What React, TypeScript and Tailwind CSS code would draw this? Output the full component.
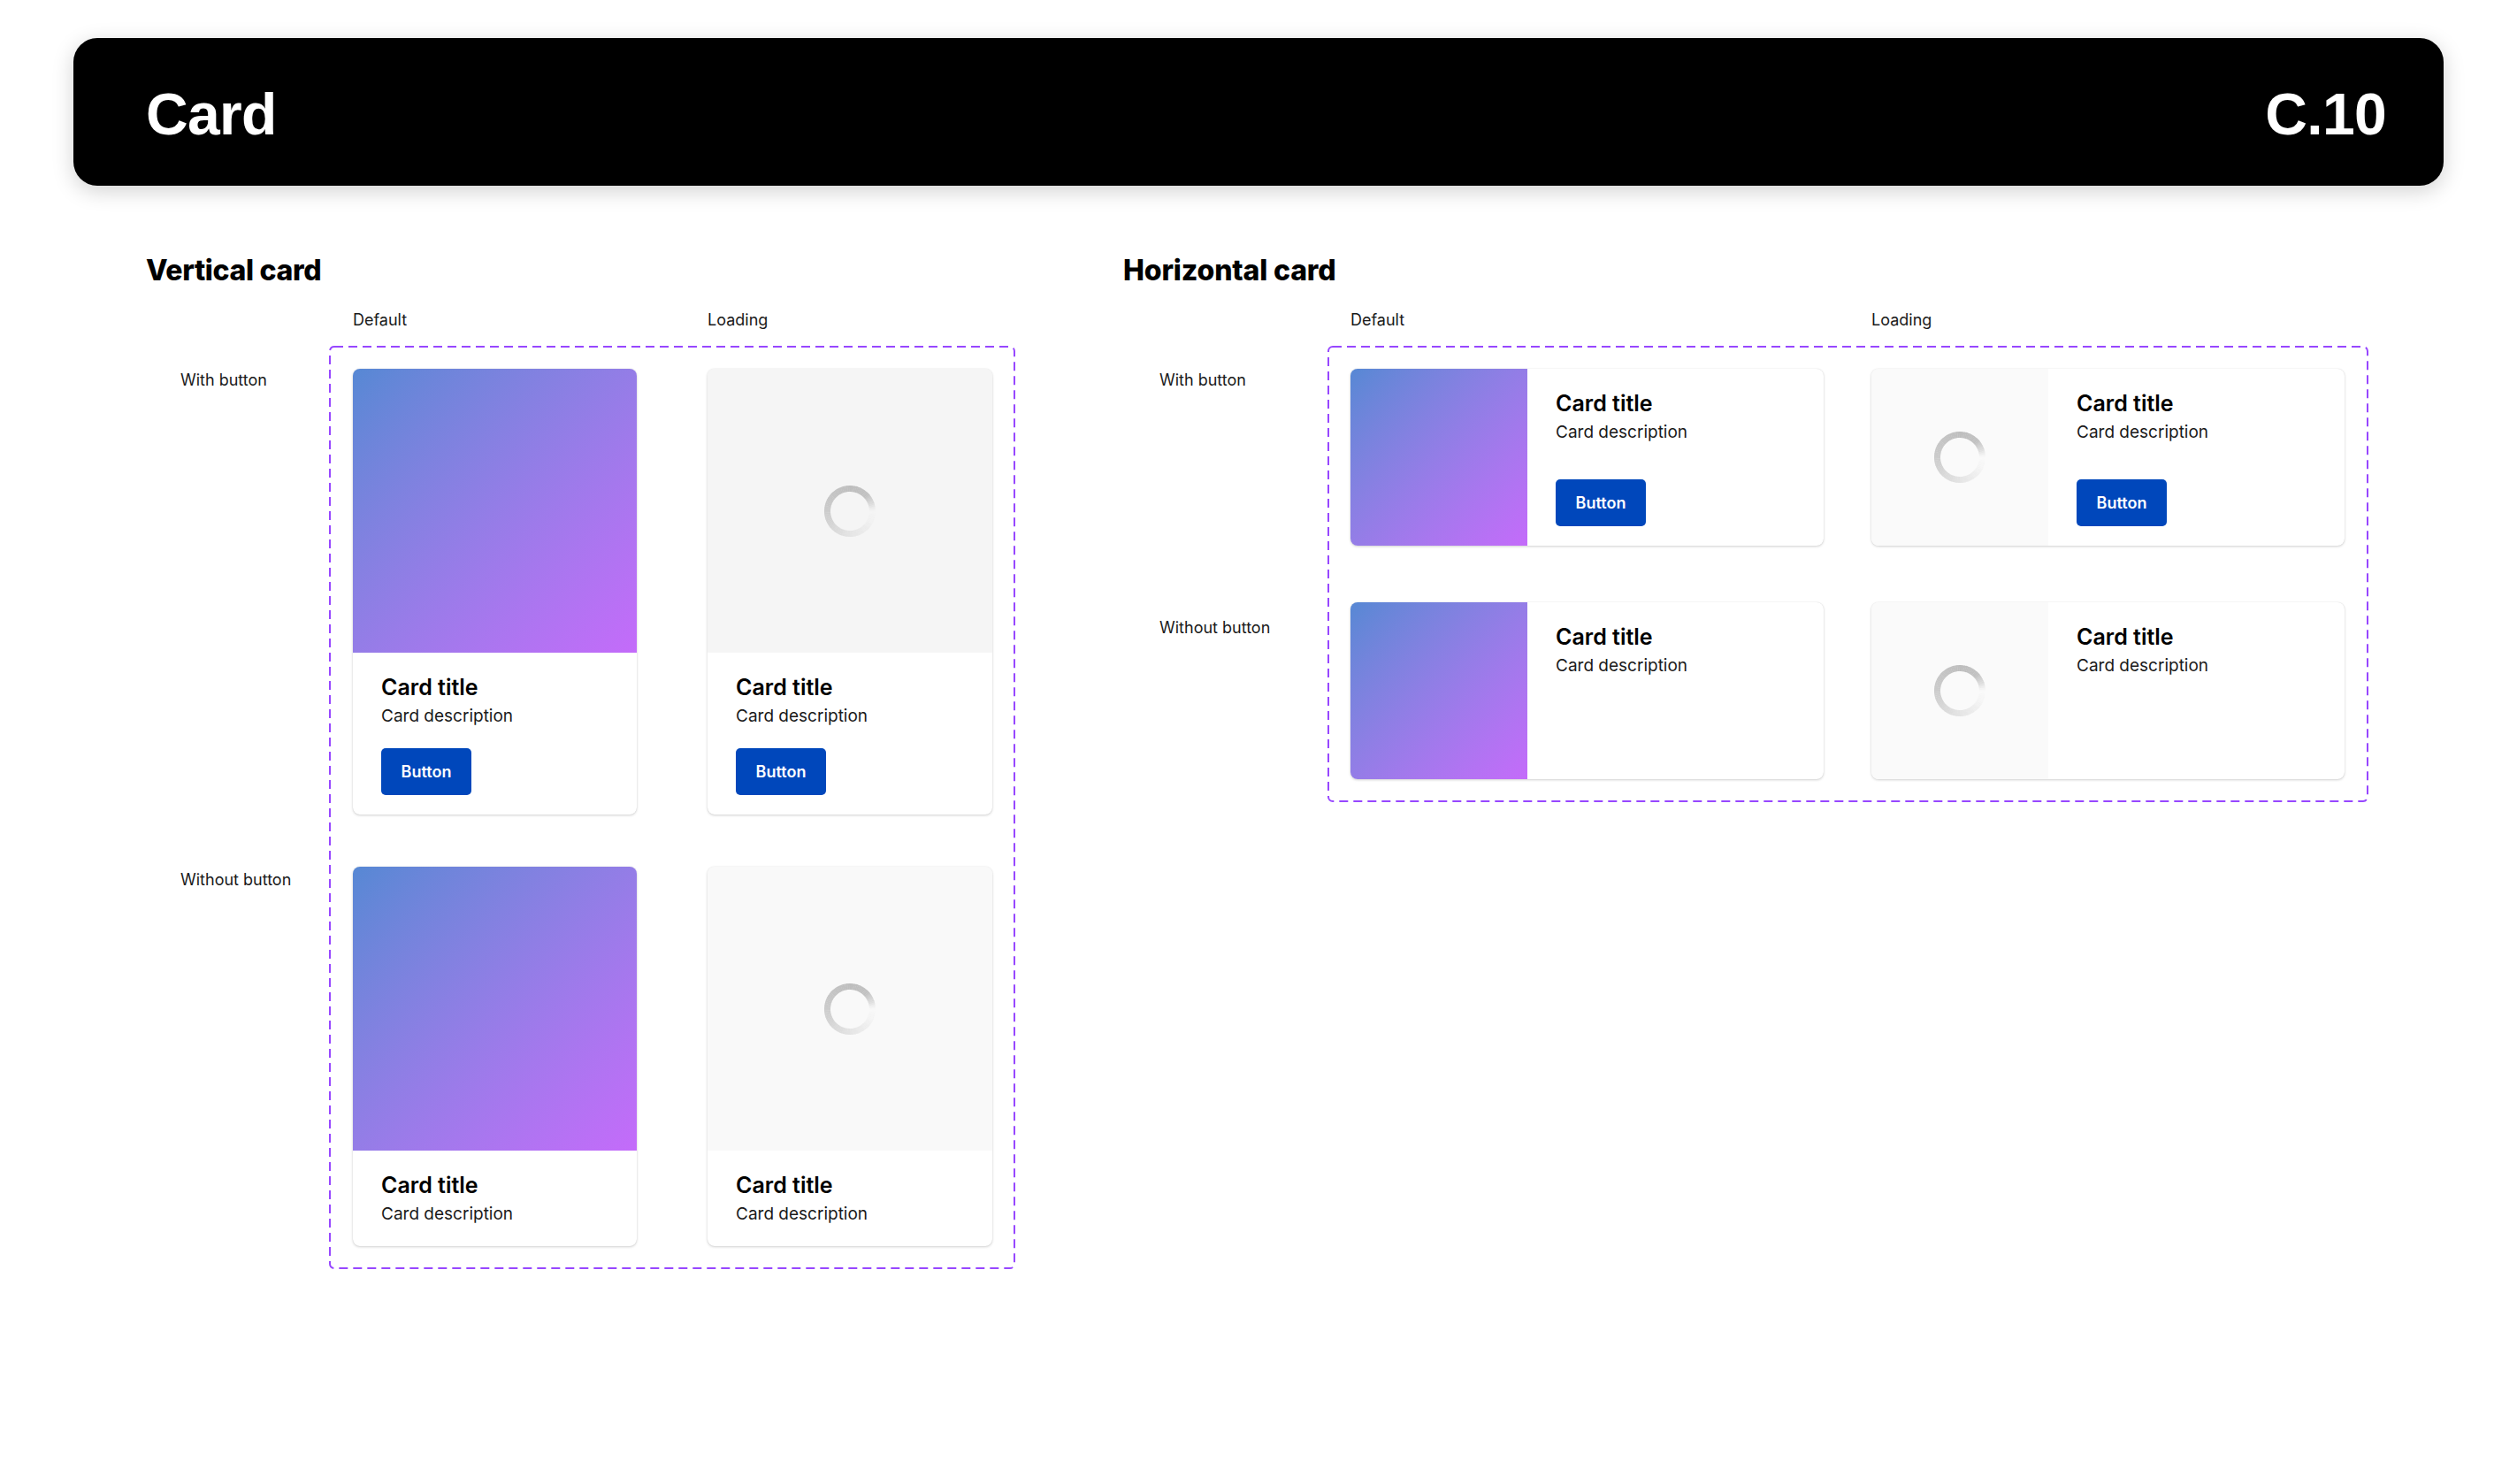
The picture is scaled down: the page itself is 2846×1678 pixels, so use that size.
import React from "react";

function Spinner() {
  const N = 90;
  const cx = 29;
  const cy = 29;
  const r = 25.5;
  // [t, gray, opacity], t measured clockwise from 3 o'clock
  const stops: [number, number, number][] = [
    [0, 235, 0],
    [0.07, 230, 0.2],
    [0.25, 228, 1],
    [0.5, 203, 1],
    [0.75, 190, 1],
    [0.88, 193, 1],
    [0.95, 205, 0.55],
    [1, 225, 0],
  ];
  const at = (t: number) => {
    for (let i = 0; i < stops.length - 1; i++) {
      const [t0, g0, o0] = stops[i];
      const [t1, g1, o1] = stops[i + 1];
      if (t >= t0 && t <= t1) {
        const k = (t - t0) / (t1 - t0);
        return [g0 + (g1 - g0) * k, o0 + (o1 - o0) * k];
      }
    }
    return [225, 0];
  };
  const segs = [];
  for (let i = 0; i < N; i++) {
    const a0 = (i / N) * Math.PI * 2;
    const a1 = ((i + 1) / N) * Math.PI * 2 + 0.012;
    const x0 = cx + r * Math.cos(a0);
    const y0 = cy + r * Math.sin(a0);
    const x1 = cx + r * Math.cos(a1);
    const y1 = cy + r * Math.sin(a1);
    const [g, o] = at((i + 0.5) / N);
    const gg = Math.round(g);
    segs.push(
      <path
        key={i}
        d={`M ${x0} ${y0} A ${r} ${r} 0 0 1 ${x1} ${y1}`}
        stroke={`rgb(${gg},${gg},${gg})`}
        strokeOpacity={o}
        strokeWidth={7}
        fill="none"
      />
    );
  }
  return (
    <svg width="58" height="58" viewBox="0 0 58 58">
      {segs}
    </svg>
  );
}

function DashedOutline({ w, h }: { w: number; h: number }) {
  return (
    <svg
      className="pointer-events-none absolute inset-0"
      width={w}
      height={h}
      viewBox={`0 0 ${w} ${h}`}
    >
      <rect
        x={1}
        y={1}
        width={w - 2}
        height={h - 2}
        rx={5}
        ry={5}
        fill="none"
        stroke="#9747ff"
        strokeWidth={2}
        strokeDasharray="10 6"
      />
    </svg>
  );
}

function Btn({ className }: { className: string }) {
  return (
    <div
      className={`${className} flex h-[53px] w-[102px] items-center justify-center rounded-[5px] bg-[#0047bb] text-[18px] font-semibold text-white`}
    >
      Button
    </div>
  );
}

function VerticalCard({
  loading,
  button,
  loadBg,
}: {
  loading: boolean;
  button: boolean;
  loadBg: string;
}) {
  return (
    <div className="flex flex-col overflow-hidden rounded-lg bg-white shadow-[0_1px_3px_rgba(0,0,0,0.18),0_0_1px_rgba(0,0,0,0.14)]">
      {loading ? (
        <div className={`flex h-[321px] items-center justify-center ${loadBg}`}>
          <Spinner />
        </div>
      ) : (
        <div className="h-[321px] bg-linear-to-br from-[#5688d4] to-[#c46bfa]" />
      )}
      <div className="px-8 pb-[22px] pt-[23px]">
        <div className="text-[25px] font-semibold leading-[32px] text-black">Card title</div>
        <div className="mt-[3px] text-[19px] leading-[28px] text-[#1a1a1a]">Card description</div>
        {button && <Btn className="mt-[22px]" />}
      </div>
    </div>
  );
}

function HorizontalCard({ loading, button }: { loading: boolean; button: boolean }) {
  return (
    <div className="flex h-[200px] overflow-hidden rounded-lg bg-white shadow-[0_1px_3px_rgba(0,0,0,0.18),0_0_1px_rgba(0,0,0,0.14)]">
      {loading ? (
        <div className="flex w-[200px] shrink-0 items-center justify-center bg-[#fafafa]">
          <Spinner />
        </div>
      ) : (
        <div className="w-[200px] shrink-0 bg-linear-to-br from-[#5688d4] to-[#c46bfa]" />
      )}
      <div className="flex flex-1 flex-col px-8 pb-[22px] pt-[23px]">
        <div className="text-[25px] font-semibold leading-[32px] text-black">Card title</div>
        <div className="mt-[3px] text-[19px] leading-[28px] text-[#1a1a1a]">Card description</div>
        {button && <Btn className="mt-auto" />}
      </div>
    </div>
  );
}

export default function App() {
  return (
    <div className="relative h-[1678px] w-[2846px] overflow-hidden bg-white px-[83px] pt-[43px] font-['Inter',sans-serif] text-black">
      <header className="flex h-[167px] items-center justify-between rounded-[27px] bg-black pl-[82px] pr-[65px] pt-[4px] font-['Liberation_Sans',Arial,sans-serif] text-[66px] font-bold leading-none tracking-[-0.01em] text-white shadow-[0_6px_24px_rgba(0,0,0,0.18)]">
        <span>Card</span>
        <span>C.10</span>
      </header>

      <div className="mt-[76px] flex items-start">
        {/* Vertical card */}
        <section className="ml-[82px] flex flex-col">
          <h2 className="text-[32px] font-extrabold leading-[40px] tracking-[-0.01em]">Vertical card</h2>
          <div className="mt-6 grid grid-cols-[207px_27px_321px_80px_322px_26px] grid-rows-[24px_17px_26px_auto_59px_auto_26px] text-[18px] leading-[24px] text-[#1a1a1a]">
            <div className="col-start-3 row-start-1">Default</div>
            <div className="col-start-5 row-start-1">Loading</div>
            <div className="relative col-start-2 col-end-7 row-start-3 row-end-8">
              <DashedOutline w={776} h={1044} />
            </div>
            <div className="col-start-1 row-start-4 pl-[39px] pt-[1px]">With button</div>
            <div className="col-start-3 row-start-4">
              <VerticalCard loading={false} button={true} loadBg="bg-[#f5f5f5]" />
            </div>
            <div className="col-start-5 row-start-4">
              <VerticalCard loading={true} button={true} loadBg="bg-[#f5f5f5]" />
            </div>
            <div className="col-start-1 row-start-6 pl-[39px] pt-[3px]">Without button</div>
            <div className="col-start-3 row-start-6">
              <VerticalCard loading={false} button={false} loadBg="bg-[#f9f9f9]" />
            </div>
            <div className="col-start-5 row-start-6">
              <VerticalCard loading={true} button={false} loadBg="bg-[#f9f9f9]" />
            </div>
          </div>
        </section>

        {/* Horizontal card */}
        <section className="ml-[122px] flex flex-col">
          <h2 className="text-[32px] font-extrabold leading-[40px] tracking-[-0.005em]">Horizontal card</h2>
          <div className="mt-6 grid grid-cols-[231px_26px_535px_54px_535px_27px] grid-rows-[24px_17px_26px_200px_64px_200px_26px] text-[18px] leading-[24px] text-[#1a1a1a]">
            <div className="col-start-3 row-start-1">Default</div>
            <div className="col-start-5 row-start-1">Loading</div>
            <div className="relative col-start-2 col-end-7 row-start-3 row-end-8">
              <DashedOutline w={1177} h={516} />
            </div>
            <div className="col-start-1 row-start-4 pl-[41px] pt-[1px]">With button</div>
            <div className="col-start-3 row-start-4">
              <HorizontalCard loading={false} button={true} />
            </div>
            <div className="col-start-5 row-start-4">
              <HorizontalCard loading={true} button={true} />
            </div>
            <div className="col-start-1 row-start-6 pl-[41px] pt-[17px]">Without button</div>
            <div className="col-start-3 row-start-6">
              <HorizontalCard loading={false} button={false} />
            </div>
            <div className="col-start-5 row-start-6">
              <HorizontalCard loading={true} button={false} />
            </div>
          </div>
        </section>
      </div>
    </div>
  );
}
